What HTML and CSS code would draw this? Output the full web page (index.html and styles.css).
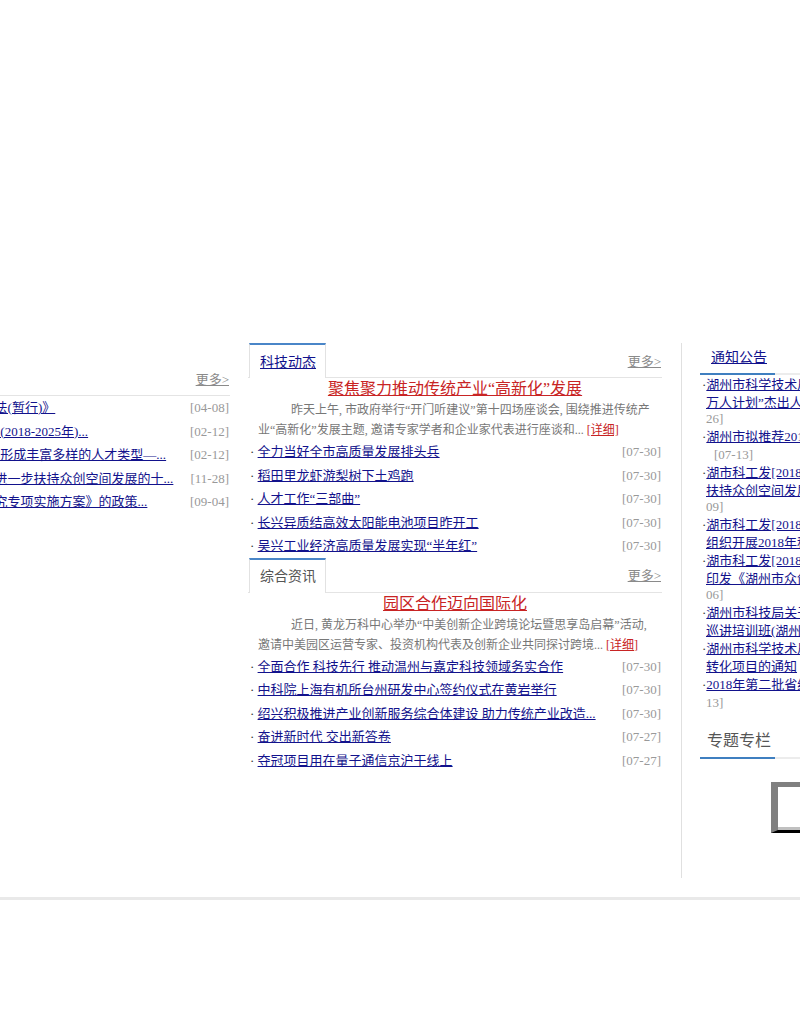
FILE: index.html
```html
<!DOCTYPE html>
<html lang="zh-CN">
<head>
<meta charset="utf-8">
<title>湖州市科技局</title>
<link rel="stylesheet" href="styles.css">
</head>
<body>
<div class="page">
  <div class="row">
    <section class="col col-left">
      <div class="head">
        <div class="tab"><span>政策法规</span></div>
        <a class="more" href="#">更多&gt;</a>
      </div>
      <ul class="list">
        <li><span class="t">· <a href="#">《湖州市科技计划项目管理办法(暂行)》</a></span><span class="d">[04-08]</span></li>
        <li><span class="t">· <a href="#">湖州市“科技人才发展中期规划(2018-2025年)...</a></span><span class="d">[02-12]</span></li>
        <li><span class="t">· <a href="#">湖州市推进人才体制机制改革“形成丰富多样的人才类型—...</a></span><span class="d">[02-12]</span></li>
        <li><span class="t">· <a href="#">《湖州市人民政府办公室关于进一步扶持众创空间发展的十...</a></span><span class="d">[11-28]</span></li>
        <li><span class="t">· <a href="#">关于印发《湖州市科技创新研究专项实施方案》的政策...</a></span><span class="d">[09-04]</span></li>
      </ul>
    </section>

    <section class="col col-mid">
      <div class="head">
        <div class="tab"><a href="#">科技动态</a></div>
        <a class="more" href="#">更多&gt;</a>
      </div>
      <h3 class="headline"><a href="#">聚焦聚力推动传统产业“高新化”发展</a></h3>
      <p class="summary">昨天上午, 市政府举行“开门听建议”第十四场座谈会, 围绕推进传统产业“高新化”发展主题, 邀请专家学者和企业家代表进行座谈和... <a class="detail" href="#">[详细]</a></p>
      <ul class="list">
        <li><span class="t">· <a href="#">全力当好全市高质量发展排头兵</a></span><span class="d">[07-30]</span></li>
        <li><span class="t">· <a href="#">稻田里龙虾游梨树下土鸡跑</a></span><span class="d">[07-30]</span></li>
        <li><span class="t">· <a href="#">人才工作“三部曲”</a></span><span class="d">[07-30]</span></li>
        <li><span class="t">· <a href="#">长兴异质结高效太阳能电池项目昨开工</a></span><span class="d">[07-30]</span></li>
        <li><span class="t">· <a href="#">吴兴工业经济高质量发展实现“半年红”</a></span><span class="d">[07-30]</span></li>
      </ul>

      <div class="head">
        <div class="tab"><span>综合资讯</span></div>
        <a class="more" href="#">更多&gt;</a>
      </div>
      <h3 class="headline"><a href="#">园区合作迈向国际化</a></h3>
      <p class="summary">近日, 黄龙万科中心举办“中美创新企业跨境论坛暨思享岛启幕”活动, 邀请中美园区运营专家、投资机构代表及创新企业共同探讨跨境... <a class="detail" href="#">[详细]</a></p>
      <ul class="list">
        <li><span class="t">· <a href="#">全面合作 科技先行 推动温州与嘉定科技领域务实合作</a></span><span class="d">[07-30]</span></li>
        <li><span class="t">· <a href="#">中科院上海有机所台州研发中心签约仪式在黄岩举行</a></span><span class="d">[07-30]</span></li>
        <li><span class="t">· <a href="#">绍兴积极推进产业创新服务综合体建设 助力传统产业改造...</a></span><span class="d">[07-30]</span></li>
        <li><span class="t">· <a href="#">奋进新时代 交出新答卷</a></span><span class="d">[07-27]</span></li>
        <li><span class="t">· <a href="#">夺冠项目用在量子通信京沪干线上</a></span><span class="d">[07-27]</span></li>
      </ul>
    </section>

    <aside class="col col-right">
      <div class="rhead"><a class="rtitle" href="#">通知公告</a></div>
      <ul class="notice">
        <li><span class="dot">·</span><a href="#">湖州市科学技术局关于组织推荐浙江省第三批万人计划”杰出人才推荐工作的有关通知</a><span class="nd">[07-26]</span></li>
        <li><span class="dot">·</span><a href="#">湖州市拟推荐2018年度省科技计划项目公示</a><span class="nd">[07-13]</span></li>
        <li><span class="dot">·</span><a href="#">湖市科工发[2018]35号关于印发湖州市进一步扶持众创空间发展若干政策意见的通知</a><span class="nd">[07-09]</span></li>
        <li><span class="dot">·</span><a href="#">湖市科工发[2018]36号关于在全市科技系统内组织开展2018年科技活动周的通知</a><span class="nd">[07-05]</span></li>
        <li><span class="dot">·</span><a href="#">湖市科工发[2018]33号湖州市科学技术局关于印发《湖州市众创空间建设管理办法》</a><span class="nd">[07-06]</span></li>
        <li><span class="dot">·</span><a href="#">湖州市科技局关于举办全市科技成果转化政策巡讲培训班(湖州市区专场)的通知</a><span class="nd">[07-03]</span></li>
        <li><span class="dot">·</span><a href="#">湖州市科学技术局关于征集全市重大科技成果转化项目的通知</a><span class="nd">[07-02]</span></li>
        <li><span class="dot">·</span><a href="#">2018年第二批省级科技型中小企业公示</a><span class="nd">[07-13]</span></li>
      </ul>
      <div class="rhead rhead-2"><span class="rtitle rtitle-plain">专题专栏</span></div>
      <div class="special"><div class="banner"></div></div>
    </aside>
  </div>
  <div class="footer"></div>
</div>
</body>
</html>
```

FILE: styles.css
```css
html, body {
  margin: 0;
  padding: 0;
  overflow: hidden;
  background: #fff;
}

body {
  font-family: "Liberation Serif", "Noto Sans CJK SC", serif;
  font-size: 13px;
  color: #333;
}

a {
  color: #12128c;
  text-decoration: underline;
}

.page {
  padding-top: 343px;
}

.row {
  display: flex;
  align-items: flex-start;
  margin-left: -184px;
}

.col {
  flex: none;
}

.col-left {
  width: 414px;
  margin-top: 18px;
}

.col-mid {
  width: 414px;
  margin-left: 18px;
}

.col-right {
  width: 267px;
  margin-left: 19px;
  border-left: 1px solid #e0e0e0;
  padding: 0 0 45px 18px;
}

/* tab header */
.head {
  height: 35px;
  box-sizing: border-box;
  border-bottom: 1px solid #e4e4e4;
  display: flex;
  justify-content: space-between;
  align-items: center;
  padding-right: 1px;
}

.tab {
  align-self: stretch;
  margin: 0 0 -1px 1px;
  border-top: 2px solid #4a86c8;
  border-left: 1px solid #e2e2e2;
  border-right: 1px solid #e2e2e2;
  background: #fff;
  padding: 0 9px 2px 10px;
  display: flex;
  align-items: center;
  font-size: 14px;
  color: #555;
}

.more {
  font-size: 13px;
  color: #8a8a8a;
}

/* lead story */
.headline {
  margin: 0;
  font-size: 16px;
  font-weight: normal;
  line-height: 22px;
  text-align: center;
}

.headline a,
.detail {
  color: #c82424;
}

.summary {
  margin: 0;
  padding: 0 10px;
  font-size: 12px;
  line-height: 20px;
  color: #777;
  text-indent: 33px;
}

/* news lists */
.list {
  list-style: none;
  margin: 0;
  padding: 0;
}

.list li {
  display: flex;
  justify-content: space-between;
  align-items: center;
  height: 23.5px;
  line-height: 23.5px;
  padding: 0 1px 0 2px;
  white-space: nowrap;
}

.list .t {
  color: #333;
}

.list .d {
  color: #999;
}

/* right column */
.rhead {
  border-bottom: 2px solid #ececec;
}

.rtitle {
  display: block;
  width: 75px;
  box-sizing: border-box;
  padding-left: 11px;
  border-bottom: 2px solid #3f7fc0;
  margin-bottom: -2px;
  line-height: 30px;
  font-size: 14px;
}

.rhead-2 {
  margin-top: 18px;
}

.rtitle-plain {
  padding-left: 7px;
  padding-bottom: 4px;
  line-height: 24px;
  font-size: 16px;
  color: #555;
}

.notice {
  list-style: none;
  margin: 0;
  padding: 0;
}

.notice li {
  padding-left: 6px;
  text-indent: -4px;
  line-height: 16px;
  font-size: 13px;
}

.notice .dot {
  line-height: 20px;
  color: #333;
}

.notice .nd {
  margin-left: 8px;
  color: #999;
}

.special {
  margin-top: 23px;
  display: flex;
  justify-content: center;
}

.banner {
  width: 125px;
  height: 51px;
  box-sizing: border-box;
  border-top: 5px solid #808080;
  border-left: 7px solid #808080;
  border-right: 3px solid #000;
  border-bottom: 3px solid #000;
  box-shadow: inset 0 -3px 0 #c0c0c0;
  background: #fff;
}

.footer {
  margin-top: 19px;
  border-top: 3px solid #e9e9e9;
}
```
